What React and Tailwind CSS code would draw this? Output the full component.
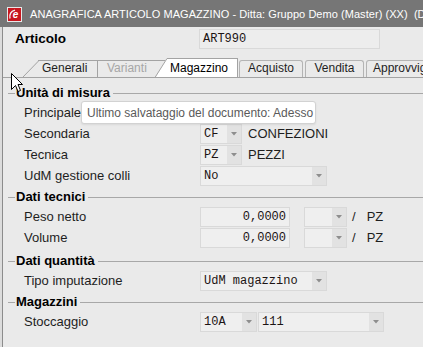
const Arrow = () => (
  <div className="flex w-[14px] shrink-0 items-center justify-center bg-[#e2e2e2]">
    <svg width="6" height="4" viewBox="0 0 6 4">
      <polygon points="0,0 6,0 3,3.5" fill="#8e8e8e" />
    </svg>
  </div>
);

const Combo = ({ className, value }) => (
  <div className={`flex h-[20px] border border-[#d9d9d9] bg-[#efefef] ${className}`}>
    <span className="flex-1 truncate pl-[3px] font-['Liberation_Mono',monospace] text-[12px] leading-[18px] text-[#1c1414]">
      {value}
    </span>
    <Arrow />
  </div>
);

const Section = ({ title }) => (
  <div className="flex h-[16px] items-center">
    <div className="ml-[5px] h-px w-[7px] bg-[#a8a8a8]" />
    <span className="ml-[1px] mr-[3px] text-[13px] font-bold text-black">{title}</span>
    <div className="h-px flex-1 bg-[#a8a8a8]" />
  </div>
);

const Row = ({ label, children }) => (
  <div className="flex h-[21px] items-center">
    <div className="w-[197px] shrink-0 pl-[21px] text-[13px] text-[#1e1e1e]">{label}</div>
    {children}
  </div>
);

const NumField = ({ value }) => (
  <div className="h-[20px] w-[90px] border border-[#d9d9d9] bg-[#efefef] pr-[3px] text-right font-['Liberation_Mono',monospace] text-[12px] leading-[18px] text-[#1c1414]">
    {value}
  </div>
);

const Logo = () => (
  <svg width="15" height="15" viewBox="0 0 15 15" className="shrink-0">
    <rect x="0.5" y="0.5" width="14" height="14" fill="#c8171f" stroke="#e8e8e8" />
    <path d="M3 11.5 Q1.8 5 8 3.2" stroke="#f2f2f2" strokeWidth="1.4" fill="none" />
    <text x="5.8" y="11.3" fontSize="10" fontWeight="bold" fontStyle="italic" fill="#ffffff" fontFamily="Liberation Sans, sans-serif">
      e
    </text>
  </svg>
);

export default function App() {
  return (
    <div className="relative h-[347px] w-[423px] overflow-hidden bg-[#dcdcdc] font-['Liberation_Sans',Arial,sans-serif]">
      <div className="flex h-[27px] items-center overflow-hidden bg-[#767676] pl-[7px] pt-[2px]">
        <Logo />
        <span className="ml-[8px] whitespace-nowrap text-[11px] tracking-[0.05px] text-white">
          ANAGRAFICA ARTICOLO MAGAZZINO - Ditta: Gruppo Demo (Master) (XX)&nbsp;&nbsp;(Demo)
        </span>
      </div>

      <div className="ml-[2px] h-[320px] border-l border-[#8c8c8c] bg-[#eaeaea]">
        <div className="flex h-[22px] items-end">
          <div className="w-[196px] pl-[12px] text-[13.5px] font-bold leading-[20px] text-black">Articolo</div>
          <div className="h-[20px] w-[181px] border border-[#d9d9d9] bg-[#ededed] pl-[3px] font-['Liberation_Mono',monospace] text-[12px] leading-[18px] text-[#1c1414]">
            ART990
          </div>
        </div>

        <div className="mt-[8px] flex h-[21px] items-end overflow-hidden border-b border-[#a3a3a3] text-[12px]">
          <div className="w-[20px] shrink-0" />
          <svg width="16" height="17" viewBox="0 0 16 17" className="shrink-0">
            <line x1="0" y1="17" x2="16" y2="0.5" stroke="#a3a3a3" />
            <line x1="15" y1="0.5" x2="16" y2="0.5" stroke="#a3a3a3" />
          </svg>
          <div className="h-[17px] w-[59px] shrink-0 border-r border-t border-[#a3a3a3] pl-[3px] leading-[15px] text-[#1e1e1e]">
            Generali
          </div>
          <div className="h-[17px] w-[67px] shrink-0 border-t border-[#a3a3a3] pl-[9px] leading-[15px] text-[#a6a6a6]">
            Varianti
          </div>
          <div className="relative -mb-px -ml-[10px] flex h-[20px] shrink-0">
            <svg width="12" height="20" viewBox="0 0 12 20">
              <polygon points="0,20 12,0 12,20" fill="#ffffff" />
              <line x1="0" y1="19.5" x2="12" y2="0.5" stroke="#a3a3a3" />
            </svg>
            <div className="h-[20px] w-[71px] border-r border-t border-[#a3a3a3] bg-white pl-[3px] leading-[18px] text-black">
              Magazzino
            </div>
          </div>
          <div className="ml-[1px] flex h-[17px] w-[64px] shrink-0 justify-center rounded-t-[3px] border-l border-r border-t border-[#b4b4b4] leading-[15px] text-[#1e1e1e]">
            Acquisto
          </div>
          <div className="ml-[2px] flex h-[17px] w-[59px] shrink-0 justify-center rounded-t-[3px] border-l border-r border-t border-[#b4b4b4] leading-[15px] text-[#1e1e1e]">
            Vendita
          </div>
          <div className="ml-[2px] h-[17px] w-[70px] shrink-0 overflow-hidden whitespace-nowrap rounded-t-[3px] border-l border-r border-t border-[#b4b4b4] pl-[6px] leading-[15px] text-[#1e1e1e]">
            Approvvigionamento
          </div>
        </div>

        <div className="mt-[7px]">
          <Section title="Unità di misura" />
          <div className="mt-[1px]">
            <Row label="Principale">
              <Combo className="w-[42px]" value="" />
            </Row>
            <Row label="Secondaria">
              <Combo className="w-[42px]" value="CF" />
              <span className="ml-[6px] text-[13px] text-[#1e1e1e]">CONFEZIONI</span>
            </Row>
            <Row label="Tecnica">
              <Combo className="w-[42px]" value="PZ" />
              <span className="ml-[6px] text-[13px] text-[#1e1e1e]">PEZZI</span>
            </Row>
            <Row label="UdM gestione colli">
              <Combo className="w-[127px]" value="No" />
            </Row>
          </div>

          <div className="mt-[3px]">
            <Section title="Dati tecnici" />
          </div>
          <div className="mt-[1px]">
            <Row label="Peso netto">
              <NumField value="0,0000" />
              <Combo className="ml-[14px] w-[43px]" value="" />
              <span className="ml-[5px] text-[13px] text-[#1e1e1e]">/</span>
              <span className="ml-[11px] text-[13px] text-[#1e1e1e]">PZ</span>
            </Row>
            <Row label="Volume">
              <NumField value="0,0000" />
              <Combo className="ml-[14px] w-[43px]" value="" />
              <span className="ml-[5px] text-[13px] text-[#1e1e1e]">/</span>
              <span className="ml-[11px] text-[13px] text-[#1e1e1e]">PZ</span>
            </Row>
          </div>

          <div className="mt-[5px]">
            <Section title="Dati quantità" />
          </div>
          <div className="mt-[1px]">
            <Row label="Tipo imputazione">
              <Combo className="w-[127px]" value="UdM magazzino" />
            </Row>
          </div>

          <div className="mt-[3px]">
            <Section title="Magazzini" />
          </div>
          <div className="mt-[1px]">
            <Row label="Stoccaggio">
              <Combo className="w-[57px]" value="10A" />
              <Combo className="ml-px w-[126px]" value="111" />
            </Row>
          </div>
        </div>
      </div>

      <div className="absolute left-[81px] top-[101px] flex h-[23px] w-[235px] items-center rounded-[3px] border border-[#d2d2d2] bg-white pl-[5px] text-[12px] text-[#5a5a5a] shadow-[0_1px_2px_rgba(0,0,0,0.08)]">
        Ultimo salvataggio del documento: Adesso
      </div>

      <svg className="absolute left-[11px] top-[73px]" width="13" height="20" viewBox="0 0 13 20">
        <path d="M0.5 0.5 L0.5 16.5 L4.5 12.5 L7 18.5 L9.5 17.5 L7 11.5 L11.5 11.5 Z" fill="#ffffff" stroke="#000000" strokeLinejoin="round" />
      </svg>
    </div>
  );
}
